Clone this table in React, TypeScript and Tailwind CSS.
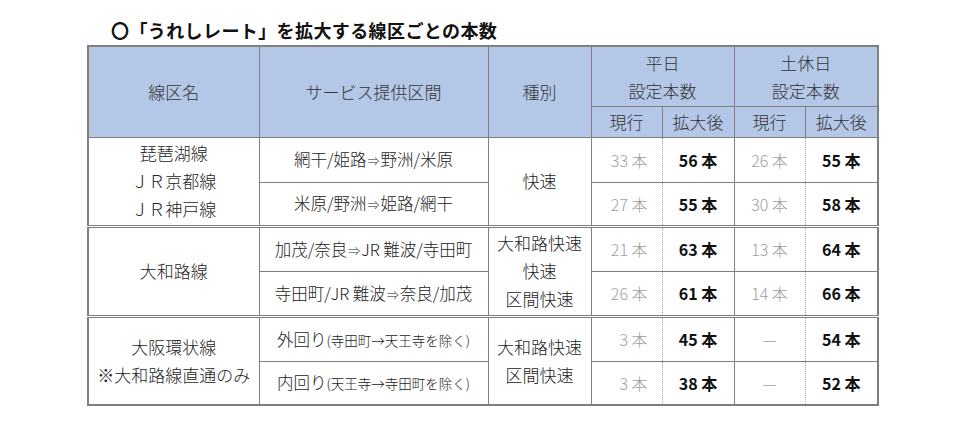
import React from "react";

const font = { fontFamily: '"Noto Sans CJK JP", "Noto Sans", sans-serif' };

const B = "border border-[#7f7f7f]";
const cur = `${B} font-light text-[#a0a0a0] text-[16px] text-right pr-[14px] [border-right-style:dotted] [border-right-color:#aaaaaa]`;
const aft = `${B} text-[#111] font-bold text-[16px] text-center [border-left-style:dotted] [border-left-color:#aaaaaa]`;
const cur2 = `${B} font-light text-[#a0a0a0] text-[16px] text-center [border-right-style:dotted] [border-right-color:#aaaaaa]`;

type Row = { a: React.ReactNode; b: string; c: string; d: string; e: string };

function Nums({ r, top }: { r: Row; top?: boolean }) {
  const t = top ? " border-t-[3px] [border-top-style:double]" : "";
  return (
    <>
      <td className={cur + t}>{r.b}</td>
      <td className={aft + t}>{r.c}</td>
      <td className={cur2 + t}>{r.d}</td>
      <td className={aft + t}>{r.e}</td>
    </>
  );
}

const Arr = () => <span className="text-[12px] mx-[1px]">⇒</span>;

export default function App() {
  const g1: Row[] = [
    { a: <>網干/姫路<Arr />野洲/米原</>, b: "33 本", c: "56 本", d: "26 本", e: "55 本" },
    { a: <>米原/野洲<Arr />姫路/網干</>, b: "27 本", c: "55 本", d: "30 本", e: "58 本" },
  ];
  const g2: Row[] = [
    { a: <>加茂/奈良<Arr />JR 難波/寺田町</>, b: "21 本", c: "63 本", d: "13 本", e: "64 本" },
    { a: <>寺田町/JR 難波<Arr />奈良/加茂</>, b: "26 本", c: "61 本", d: "14 本", e: "66 本" },
  ];
  const g3: Row[] = [
    {
      a: (
        <>
          外回り<span className="text-[13.5px]">(寺田町→天王寺を除く)</span>
        </>
      ),
      b: "3 本",
      c: "45 本",
      d: "—",
      e: "54 本",
    },
    {
      a: (
        <>
          内回り<span className="text-[13.5px]">(天王寺→寺田町を除く)</span>
        </>
      ),
      b: "3 本",
      c: "38 本",
      d: "—",
      e: "52 本",
    },
  ];
  const dbl = " border-t-[3px] [border-top-style:double]";
  const name = `${B} font-light text-center text-[17px] leading-[28px] text-[#222]`;
  const sec = `${B} font-light text-center text-[16.5px] text-[#222]`;
  const th = `${B} font-light`;

  return (
    <div className="w-[960px] h-[426px] bg-white" style={font}>
      <div className="pl-[87px] pt-[17px]">
        <div className="ml-[24px] h-[26px] leading-[26px] text-[18px] font-bold text-[#111] tracking-[0.4px]">
          〇「うれしレート」を拡大する線区ごとの本数
        </div>
        <table className="mt-[2px] border-collapse table-fixed w-[790px] border-2 border-[#7f7f7f] text-[#222]">
          <colgroup>
            <col className="w-[171px]" />
            <col className="w-[229px]" />
            <col className="w-[103px]" />
            <col className="w-[71px]" />
            <col className="w-[72px]" />
            <col className="w-[71px]" />
            <col className="w-[73px]" />
          </colgroup>
          <thead>
            <tr className="h-[60px] bg-[#b4c7e7] text-[#333] text-[17px]">
              <th rowSpan={2} className={th}>線区名</th>
              <th rowSpan={2} className={th}>サービス提供区間</th>
              <th rowSpan={2} className={th}>種別</th>
              <th colSpan={2} className={`${th} leading-[28px] pt-[1px]`}>
                平日
                <br />
                設定本数
              </th>
              <th colSpan={2} className={`${th} leading-[28px] pt-[1px]`}>
                土休日
                <br />
                設定本数
              </th>
            </tr>
            <tr className="h-[31px] bg-[#b4c7e7] text-[#333] text-[17px]">
              <th className={th}>現行</th>
              <th className={th}>拡大後</th>
              <th className={th}>現行</th>
              <th className={th}>拡大後</th>
            </tr>
          </thead>
          <tbody>
            <tr className="h-[45px]">
              <td rowSpan={2} className={name}>
                琵琶湖線
                <br />
                ＪＲ京都線
                <br />
                ＪＲ神戸線
              </td>
              <td className={sec}>{g1[0].a}</td>
              <td rowSpan={2} className={name}>快速</td>
              <Nums r={g1[0]} />
            </tr>
            <tr className="h-[44px]">
              <td className={sec}>{g1[1].a}</td>
              <Nums r={g1[1]} />
            </tr>
            <tr className="h-[45px]">
              <td rowSpan={2} className={name + dbl}>大和路線</td>
              <td className={sec + dbl}>{g2[0].a}</td>
              <td rowSpan={2} className={name + dbl}>
                大和路快速
                <br />
                快速
                <br />
                区間快速
              </td>
              <Nums r={g2[0]} top />
            </tr>
            <tr className="h-[45px]">
              <td className={sec}>{g2[1].a}</td>
              <Nums r={g2[1]} />
            </tr>
            <tr className="h-[45px]">
              <td rowSpan={2} className={name + dbl}>
                大阪環状線
                <br />
                ※大和路線直通のみ
              </td>
              <td className={sec + dbl}>{g3[0].a}</td>
              <td rowSpan={2} className={name + dbl}>
                大和路快速
                <br />
                区間快速
              </td>
              <Nums r={g3[0]} top />
            </tr>
            <tr className="h-[44px]">
              <td className={sec}>{g3[1].a}</td>
              <Nums r={g3[1]} />
            </tr>
          </tbody>
        </table>
      </div>
    </div>
  );
}
